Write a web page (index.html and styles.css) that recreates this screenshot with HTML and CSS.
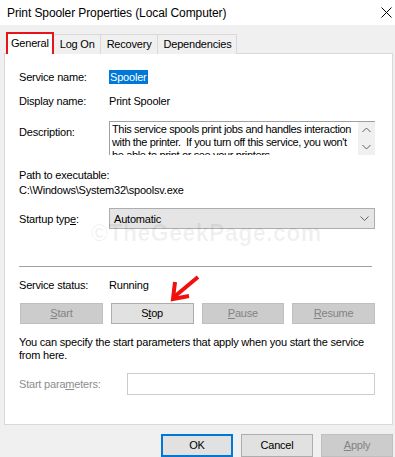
FILE: index.html
```html
<!DOCTYPE html>
<html>
<head>
<meta charset="utf-8">
<link rel="stylesheet" href="styles.css">
</head>
<body>
<div class="window">
  <div class="titlebar">
    <span class="title">Print Spooler Properties (Local Computer)</span>
    <svg class="close" width="11" height="11" viewBox="0 0 11 11"><path d="M0.5 0.5 L10.5 10.5 M10.5 0.5 L0.5 10.5" stroke="#000" stroke-width="1" fill="none"/></svg>
  </div>
  <div class="tabs">
    <div class="tab selected">General</div>
    <div class="tab">Log On</div>
    <div class="tab">Recovery</div>
    <div class="tab">Dependencies</div>
  </div>
  <div class="panel">
    <div class="row r-name">
      <span class="label">Service name:</span>
      <span class="sel">Spooler</span>
    </div>
    <div class="row r-display">
      <span class="label">Display name:</span>
      <span>Print Spooler</span>
    </div>
    <div class="row r-desc">
      <span class="label desc-label">Description:</span>
      <div class="textarea">
        <div class="ta-text">
          <div>This service spools print jobs and handles interaction</div>
          <div>with the printer.&nbsp; If you turn off this service, you won't</div>
          <div>be able to print or see your printers.</div>
        </div>
        <div class="scroll">
          <svg width="9" height="6" viewBox="0 0 9 6"><path d="M0.5 5 L4.5 1 L8.5 5" stroke="#606060" fill="none"/></svg>
          <svg width="9" height="6" viewBox="0 0 9 6"><path d="M0.5 1 L4.5 5 L8.5 1" stroke="#606060" fill="none"/></svg>
        </div>
      </div>
    </div>
    <div class="path">
      <div>Path to executable:</div>
      <div>C:\Windows\System32\spoolsv.exe</div>
    </div>
    <div class="row r-startup">
      <span class="label">Startup typ<u>e</u>:</span>
      <div class="combo">
        <span>Automatic</span>
        <svg width="9" height="5" viewBox="0 0 9 5"><path d="M0.5 0.5 L4.5 4.5 L8.5 0.5" stroke="#606060" fill="none"/></svg>
      </div>
    </div>
    <div class="sep"></div>
    <div class="row r-status">
      <span class="label">Service status:</span>
      <span>Running</span>
    </div>
    <div class="btns">
      <div class="btn disabled"><u>S</u>tart</div>
      <div class="btn">S<u>t</u>op</div>
      <div class="btn disabled"><u>P</u>ause</div>
      <div class="btn disabled"><u>R</u>esume</div>
    </div>
    <p class="note">You can specify the start parameters that apply when you start the service from here.</p>
    <div class="row r-params">
      <span class="label params-label">Start para<u>m</u>eters:</span>
      <div class="input"></div>
    </div>
    <svg class="arrow" width="34" height="30" viewBox="0 0 34 30">
      <path d="M28 3 L4 23" stroke="#f01010" stroke-width="4" fill="none"/>
      <path d="M5 8 L3 25 L19 22" stroke="#f01010" stroke-width="4" fill="none" stroke-linejoin="miter"/>
    </svg>
    <div class="watermark">©TheGeekPage.com</div>
  </div>
  <div class="footer">
    <div class="fbtn ok">OK</div>
    <div class="fbtn">Cancel</div>
    <div class="fbtn disabled"><u>A</u>pply</div>
  </div>
</div>
</body>
</html>
```

FILE: styles.css
```css
* { box-sizing: border-box; }
html, body { margin: 0; padding: 0; }
body {
  background: #f0f0f0;
  font-family: "Liberation Sans", Arial, sans-serif;
  font-size: 11px;
  letter-spacing: -0.2px;
  color: #000;
  width: 395px;
  height: 457px;
  overflow: hidden;
}
.window { width: 395px; }
.titlebar {
  height: 25px;
  background: #fff;
  display: flex;
  align-items: center;
  justify-content: space-between;
  padding: 0 3px 0 7px;
}
.title { font-size: 12px; letter-spacing: -0.1px; color: #000; }
.tabs {
  display: flex;
  align-items: flex-end;
  padding-left: 6px;
  height: 29px;
  margin-bottom: -1px;
  position: relative;
  z-index: 1;
}
.tab {
  height: 20px;
  line-height: 18px;
  padding: 0 5px 0 6px;
  border: 1px solid #d9d9d9;
  border-bottom: none;
  border-left: none;
  background: #f0f0f0;
}
.tab.selected {
  height: 22px;
  line-height: 19px;
  padding: 0 3px;
  background: #fff;
  border: 2px solid #e8141b;
  border-bottom: none;
}
.panel {
  position: relative;
  margin-left: 4px;
  width: 389px;
  height: 372px;
  background: #fff;
  border: 1px solid #d9d9d9;
  padding: 16px 17px 0 14px;
}
.row { display: flex; align-items: center; line-height: 14px; }
.label { width: 90px; flex: none; }
.sel { background: #0078d7; color: #fff; padding: 0 1px; line-height: 14px; }
.r-display { margin-top: 10px; }
.r-desc { margin-top: 13px; align-items: flex-start; }
.desc-label { padding-top: 4px; }
.textarea {
  flex: 1;
  height: 34px;
  display: flex;
  border-top: 1px solid #a0a0a0;
  border-left: 1px solid #a0a0a0;
  overflow: hidden;
}
.ta-text {
  flex: 1;
  min-width: 0;
  overflow: hidden;
  white-space: nowrap;
  padding: 1px 0 0 2px;
  line-height: 13px;
  letter-spacing: -0.35px;
}
.scroll {
  width: 17px;
  flex: none;
  background: #f0f0f0;
  display: flex;
  flex-direction: column;
  align-items: center;
  padding-top: 5px;
  gap: 11px;
}
.path { margin-top: 13px; line-height: 15px; }
.r-startup { margin-top: 10px; }
.combo {
  flex: 1;
  height: 21px;
  background: #e5e5e5;
  border: 1px solid #adadad;
  display: flex;
  align-items: center;
  justify-content: space-between;
  padding: 0 5px 0 4px;
}
.sep { margin-top: 37px; height: 1px; background: #a0a0a0; margin-right: 3px; }
.r-status { margin-top: 11px; }
.btns {
  margin-top: 11px;
  display: grid;
  grid-template-columns: repeat(4, 1fr);
  gap: 8px;
  padding-left: 1px;
}
.btn {
  height: 21px;
  line-height: 19px;
  text-align: center;
  background: #e1e1e1;
  border: 1px solid #adadad;
}
.btn.disabled { background: #cccccc; border-color: #bfbfbf; color: #838383; }
.note { margin: 12px 0 0 0; line-height: 13px; }
.r-params { margin-top: 11px; }
.params-label { width: 108px; color: #8d8d8d; }
.input { flex: 1; height: 22px; border: 1px solid #cccccc; background: #fff; }
.arrow { position: absolute; left: 165px; top: 220px; }
.watermark {
  position: absolute;
  left: 86px;
  top: 166px;
  font-size: 23px;
  font-weight: bold;
  color: rgba(0, 0, 0, 0.06);
  letter-spacing: 0.5px;
  pointer-events: none;
}
.footer {
  display: flex;
  justify-content: flex-end;
  gap: 8px;
  margin-top: 9px;
  padding-right: 2px;
}
.fbtn {
  width: 72px;
  height: 23px;
  line-height: 21px;
  text-align: center;
  background: #e1e1e1;
  border: 1px solid #adadad;
}
.fbtn.ok { border: 2px solid #0078d7; line-height: 19px; }
.fbtn.disabled { background: #cccccc; border-color: #bfbfbf; color: #838383; }
```
